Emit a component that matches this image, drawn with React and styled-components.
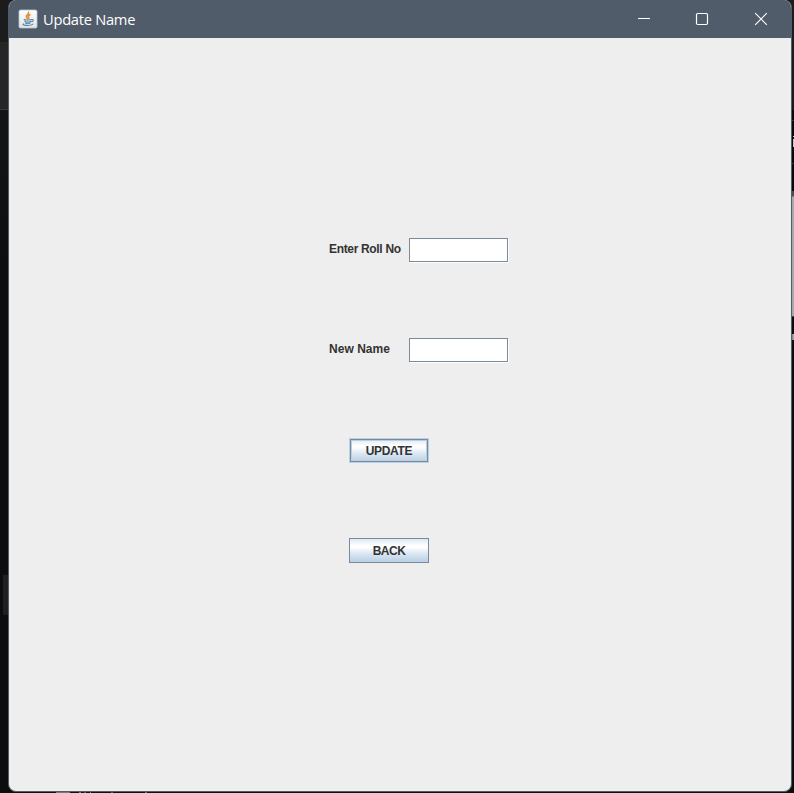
import React from "react";
import styled, { createGlobalStyle } from "styled-components";

const GlobalStyle = createGlobalStyle`
  * { box-sizing: border-box; }
  body { margin: 0; background: #0d0d0d; overflow: hidden; }
`;

const Desktop = styled.div`
  display: grid;
  grid-template-columns: 8px 784px 2px;
  grid-template-rows: 792px 1px;
  width: 794px;
  height: 793px;
  background: linear-gradient(#1c1c1c 0 30px, #0b0b0b 200px);
`;

const LeftEdge = styled.div`
  background:
    linear-gradient(#202020, #202020) 3px 575px / 5px 40px no-repeat,
    linear-gradient(#1c1c1c 0 42px, #262626 42px 109px, #3a3a3a 109px 110px, #151515 110px, #0d0d0d 300px);
`;

const RightEdge = styled.div`
  background:
    linear-gradient(#c8c8c8, #c8c8c8) 1px 139px / 1px 8px no-repeat,
    linear-gradient(#c8c8c8, #c8c8c8) 1px 136px / 1px 1px no-repeat,
    linear-gradient(90deg, #4f88a0, #d8b070) 0 334px / 2px 6px no-repeat,
    linear-gradient(
      #1c1c1c 0 40px, #171a1d 110px, #07090b 110px 120px, #303235 120px 121px,
      #07090b 121px 163px, #303235 163px 164px, #07090b 164px 191px,
      #46505c 191px 196px, #a8a8a8 197px 316px, #444 316px 317px, #0b0d0e 317px
    );
`;

const BottomEdge = styled.div`
  grid-column: 1 / -1;
  background:
    linear-gradient(#777, #777) 56px 0 / 14px 1px no-repeat,
    linear-gradient(90deg, #6f7565 0 2px, transparent 2px 5px, #65594b 5px 7px, transparent 7px 11px, #777 11px 12px, transparent 12px) 79px 0 / 12px 1px no-repeat,
    linear-gradient(#555, #555) 111px 0 / 2px 1px no-repeat,
    linear-gradient(#666, #666) 145px 0 / 2px 1px no-repeat,
    #101010;
`;

const Window = styled.main`
  display: flex;
  flex-direction: column;
  overflow: hidden;
  border: solid #505c6a;
  border-width: 0 1px 1px;
  border-radius: 8px;
  background: #eee;
`;

const TitleBar = styled.header`
  display: flex;
  flex: 0 0 38px;
  align-items: center;
  padding-left: 9px;
  background: #505c6a;
`;

const AppIcon = styled.svg`
  width: 20px;
  height: 20px;
  margin-bottom: 1px;
`;

const Title = styled.h1`
  flex: 1;
  margin: 0 0 1px 5px;
  color: #fff;
  font: 400 14.7px/20px "Open Sans", "Noto Sans", sans-serif;
  letter-spacing: -0.28px;
`;

const Controls = styled.div`
  display: flex;
  height: 38px;
`;

const ControlButton = styled.button`
  display: grid;
  place-items: center;
  width: 58px;
  padding: 0;
  border: 0;
  background: none;

  &:last-child { width: 60px; }

  svg { width: 14px; height: 14px; fill: none; stroke: #fff; }
`;

const Form = styled.form`
  display: grid;
  align-content: start;
  row-gap: 75px;
  padding: 200px 0 0 320px;
`;

const Field = styled.label`
  display: grid;
  grid-template-columns: 80px 100px;
  height: 25px;
  color: #333;
  font: 700 12px/23px "Liberation Sans", Arial, sans-serif;
  letter-spacing: ${(p) => p.$tracking}px;
  white-space: nowrap;
`;

const TextInput = styled.input`
  width: 99px;
  height: 24px;
  padding: 0 3px;
  border: 1px solid #7a8a99;
  border-radius: 0;
  outline: none;
  background: #fff;
  box-shadow: 1px 1px 0 #fff;
`;

const MetalButton = styled.button`
  width: 80px;
  height: 25px;
  margin-left: 20px;
  padding: 1px 0 0;
  border: 1px solid ${(p) => (p.$focused ? "#b8cfe5" : "#7a8a99")};
  border-radius: 0;
  outline: ${(p) => (p.$focused ? "1px solid #7a8a99" : "none")};
  outline-offset: -2px;
  background: linear-gradient(#dde8f3 0, #fff 30%, #fff 36%, #dde8f3 62%, #b8cfe5 100%);
  box-shadow: ${(p) => (p.$focused ? "inset 0 0 0 2px #b8cfe5" : "none")};
  color: #333;
  font: 700 12px/22px "Liberation Sans", Arial, sans-serif;
  letter-spacing: ${(p) => p.$tracking}px;
`;

function JavaIcon() {
  return (
    <AppIcon viewBox="0 0 20 20" aria-hidden="true">
      <defs>
        <linearGradient id="tile" x2="0" y2="1">
          <stop stopColor="#fff" />
          <stop offset="1" stopColor="#dfe3e6" />
        </linearGradient>
      </defs>
      <rect x="1" y="1" width="18" height="18" rx="1.5" fill="url(#tile)" stroke="#b9c6d0" strokeWidth=".8" />
      <g fill="none" strokeLinecap="round">
        <path d="M10.6 3.2c.8 2-2.8 2.6-2.2 4.5.2.7.9 1 1 2M12 5.8c-2.2 1-2 1.7-1.3 2.4.5.6.2 1.1-.2 1.5" stroke="#e98b3d" strokeWidth="1.6" />
        <path d="M6.3 10.4c-1 .8 5.1.9 7 .1M7 12.4c1.3.7 4.3.7 5.6 0M7.4 14.1c1.2.6 3.5.6 4.7 0M13.6 10.6c2.6-.6 2 1.9-.2 2.2M5.5 14.9c-3 1.4 6.5 2.5 9.4.2" stroke="#5685a5" strokeWidth="1.1" />
      </g>
    </AppIcon>
  );
}

export default function App() {
  return (
    <>
      <GlobalStyle />
      <Desktop>
        <LeftEdge />
        <Window>
          <TitleBar>
            <JavaIcon />
            <Title>Update Name</Title>
            <Controls>
              <ControlButton type="button" aria-label="Minimize">
                <svg viewBox="0 0 14 14"><path d="M1 6.5h12" /></svg>
              </ControlButton>
              <ControlButton type="button" aria-label="Maximize">
                <svg viewBox="0 0 14 14"><rect x="1.5" y="1.5" width="11" height="11" rx="1.2" strokeWidth="1.2" /></svg>
              </ControlButton>
              <ControlButton type="button" aria-label="Close">
                <svg viewBox="0 0 14 14"><path d="m1.2 1.2 11.6 11.6m0-11.6L1.2 12.8" strokeWidth="1.2" /></svg>
              </ControlButton>
            </Controls>
          </TitleBar>
          <Form onSubmit={(e) => e.preventDefault()}>
            <Field $tracking={-0.33}>Enter Roll No<TextInput /></Field>
            <Field $tracking={0.03}>New Name<TextInput /></Field>
            <MetalButton $focused $tracking={-0.3}>UPDATE</MetalButton>
            <MetalButton type="button" $tracking={-0.5}>BACK</MetalButton>
          </Form>
        </Window>
        <RightEdge />
        <BottomEdge />
      </Desktop>
    </>
  );
}
